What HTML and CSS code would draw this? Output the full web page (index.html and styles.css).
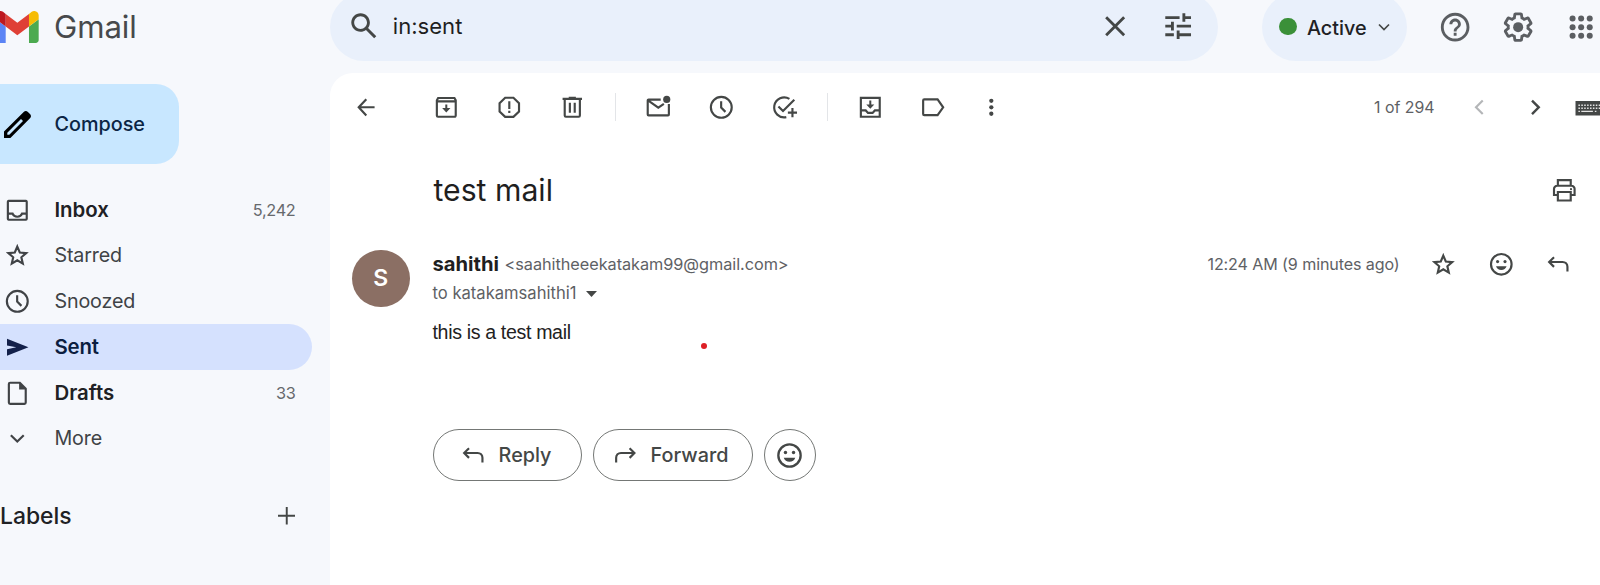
FILE: index.html
```
<!DOCTYPE html>
<html lang="en">
<head>
<meta charset="utf-8">
<title>test mail - Gmail</title>
<link rel="stylesheet" href="styles.css">
</head>
<body>
<svg class="defs" aria-hidden="true">
  <symbol id="star" viewBox="0 0 20 20"><path d="M10 3.900l1.750 4.150 4.500.4-3.400 2.950 1 4.400-3.850-2.350-3.850 2.350 1-4.400-3.400-2.950 4.500-.4z" fill="none" stroke="currentColor" stroke-width="1.500"/></symbol>
  <symbol id="clock" viewBox="0 0 20 20"><circle cx="10" cy="10" r="7.300" fill="none" stroke="currentColor" stroke-width="1.500"/><path d="M9.900 5.700v4.500l3 3" fill="none" stroke="currentColor" stroke-width="1.500"/></symbol>
  <symbol id="smile" viewBox="0 0 20 20"><circle cx="10" cy="10" r="7.200" fill="none" stroke="currentColor" stroke-width="1.500"/><circle cx="7.400" cy="8.100" r="1.100"/><circle cx="12.600" cy="8.100" r="1.100"/><path d="M6.300 11.400h7.400c-.5 1.700-1.900 2.600-3.700 2.600s-3.200-.9-3.700-2.600z"/></symbol>
  <symbol id="reply" viewBox="0 0 20 20"><path d="M7 5L3.600 8.400 7 11.800M3.800 8.400h9.200c2 0 3.400 1.400 3.400 3.400v3.300" fill="none" stroke="currentColor" stroke-width="1.500"/></symbol>
</svg>
<div class="app">
  <header class="topbar">
    <div class="brand">
      <svg class="logo" viewBox="52 42 88 66"><path fill="#5b84f5" d="M58 108h14V74L52 59v43c0 3.320 2.690 6 6 6"/><path fill="#4caa50" d="M120 108h14c3.320 0 6-2.690 6-6V59l-20 15"/><path fill="#f6bc05" d="M120 48v26l20-15v-8c0-7.420-8.470-11.650-14.400-7.200"/><path fill="#df4036" d="M72 74V48l24 18 24-18v26L96 92"/><path fill="#bd1820" d="M52 51v8l20 15V48l-5.600-4.200c-5.940-4.450-14.400-.22-14.400 7.200"/></svg>
      <span class="brand-name">Gmail</span>
    </div>
    <div class="search">
      <svg class="i34" viewBox="0 0 24 24"><path d="M20.490 19l-5.730-5.730C15.530 12.200 16 10.910 16 9.500C16 5.910 13.090 3 9.500 3S3 5.910 3 9.500C3 13.090 5.910 16 9.500 16c1.410 0 2.700-.47 3.770-1.240L19 20.490zM5 9.500C5 7.010 7.010 5 9.500 5S14 7.010 14 9.500S11.990 14 9.500 14S5 11.990 5 9.500z"/></svg>
      <span class="query">in:sent</span>
      <svg class="i34 clear" viewBox="0 0 24 24"><path d="M19 6.410L17.590 5 12 10.590 6.410 5 5 6.410 10.590 12 5 17.590 6.410 19 12 13.410 17.590 19 19 17.590 13.410 12z"/></svg>
      <svg class="i34" viewBox="0 0 24 24"><path d="M3 17v2h6v-2H3zM3 5v2h10V5H3zm10 16v-2h8v-2h-8v-2h-2v6h2zM7 9v2H3v2h4v2h2V9H7zm14 4v-2H11v2h10zm-6-4h2V7h4V5h-4V3h-2v6z"/></svg>
    </div>
    <div class="status">
      <span class="status-dot"></span>
      <span class="status-text">Active</span>
      <svg class="status-caret" viewBox="0 0 12 8"><path d="M1 1.500l5 5 5-5" fill="none" stroke="currentColor" stroke-width="1.700"/></svg>
    </div>
    <div class="tools">
      <svg class="i34" viewBox="0 0 24 24"><path d="M11 18h2v-2h-2v2zm1-16C6.480 2 2 6.480 2 12s4.480 10 10 10 10-4.480 10-10S17.520 2 12 2zm0 18c-4.410 0-8-3.590-8-8s3.590-8 8-8 8 3.590 8 8-3.590 8-8 8zm0-14c-2.210 0-4 1.790-4 4h2c0-1.100.9-2 2-2s2 .9 2 2c0 2-3 1.750-3 5h2c0-2.250 3-2.500 3-5 0-2.210-1.790-4-4-4z"/></svg>
      <svg class="i34" viewBox="0 0 24 24"><path d="M13.850 22.250h-3.700c-.74 0-1.360-.54-1.450-1.270l-.27-1.890c-.27-.14-.53-.29-.79-.46l-1.800.72c-.7.26-1.470-.03-1.810-.65L2.200 15.530c-.35-.66-.2-1.440.36-1.880l1.530-1.190c-.01-.15-.02-.3-.02-.46 0-.15.01-.31.02-.46l-1.520-1.190c-.59-.45-.74-1.260-.37-1.880l1.850-3.190c.34-.62 1.110-.9 1.790-.63l1.810.73c.26-.17.52-.32.78-.46l.27-1.910c.09-.7.71-1.250 1.440-1.250h3.700c.74 0 1.360.54 1.450 1.270l.27 1.890c.27.14.53.29.79.46l1.800-.72c.71-.26 1.480.03 1.820.65l1.840 3.180c.36.66.2 1.440-.36 1.880l-1.520 1.190c.01.15.02.3.02.46s-.01.31-.02.46l1.520 1.190c.56.45.72 1.230.37 1.860l-1.860 3.220c-.34.62-1.110.9-1.800.63l-1.800-.72c-.26.17-.52.32-.78.46l-.27 1.910c-.1.68-.72 1.220-1.460 1.220zm-3.230-2h2.760l.37-2.550.53-.22c.44-.18.88-.44 1.340-.78l.45-.34 2.380.96 1.380-2.400-2.030-1.580.07-.56c.03-.26.06-.51.06-.78s-.03-.53-.06-.78l-.07-.56 2.030-1.580-1.390-2.400-2.390.96-.45-.35c-.42-.32-.87-.58-1.330-.77l-.52-.22-.37-2.550h-2.760l-.37 2.550-.53.21c-.44.19-.88.44-1.340.79l-.45.33-2.380-.95-1.390 2.390 2.030 1.580-.07.56a7 7 0 0 0-.06.79c0 .26.02.53.06.78l.07.56-2.030 1.580 1.380 2.400 2.390-.96.45.35c.43.33.86.58 1.330.77l.53.22.38 2.550z"/><circle cx="12" cy="12" r="3.500"/></svg>
      <svg class="i34" viewBox="0 0 24 24"><circle cx="6" cy="6" r="2.100"/><circle cx="12" cy="6" r="2.100"/><circle cx="18" cy="6" r="2.100"/><circle cx="6" cy="12" r="2.100"/><circle cx="12" cy="12" r="2.100"/><circle cx="18" cy="12" r="2.100"/><circle cx="6" cy="18" r="2.100"/><circle cx="12" cy="18" r="2.100"/><circle cx="18" cy="18" r="2.100"/></svg>
    </div>
  </header>

  <div class="content">
    <nav class="sidebar">
      <div class="compose">
        <svg class="compose-icon" viewBox="0 0 27 27"><path fill-rule="evenodd" d="M0 27v-6.400L19.700 1c1.300-1.300 2.900-1.300 4.200 0L26 3.100c1.300 1.300 1.300 2.900 0 4.200L6.400 27zM3.300 23.700h2L19 10 17 8 3.300 21.700z"/></svg>
        <span>Compose</span>
      </div>
      <div class="nav-item bold">
        <svg class="i29" viewBox="0 0 20 20"><path d="M4 3.400h12a.7.7 0 0 1 .6.600v12a.7.7 0 0 1-.6.600H4a.7.7 0 0 1-.6-.6V4a.7.7 0 0 1 .6-.6zM3.500 12.300h3.200c.5 1.300 1.800 2.200 3.300 2.200s2.800-.9 3.300-2.200h3.200" fill="none" stroke="currentColor" stroke-width="1.500"/></svg>
        <span class="nav-label">Inbox</span><span class="count">5,242</span>
      </div>
      <div class="nav-item"><svg class="i29"><use href="#star"/></svg><span class="nav-label">Starred</span></div>
      <div class="nav-item"><svg class="i29"><use href="#clock"/></svg><span class="nav-label">Snoozed</span></div>
      <div class="nav-item bold active">
        <svg class="i29" viewBox="0 0 20 20"><path d="M2.800 4.100L17.800 10 2.800 15.900v-4.600L9.300 10 2.800 8.700z"/></svg>
        <span class="nav-label">Sent</span>
      </div>
      <div class="nav-item bold">
        <svg class="i29" viewBox="0 0 20 20"><path d="M5 2.600h6.800l4.100 4.100V16.500a.9.9 0 0 1-.9.900H5a.9.9 0 0 1-.9-.9v-13a.9.9 0 0 1 .9-.9z" fill="none" stroke="currentColor" stroke-width="1.500"/><path d="M11.300 2.200v5.200h5z"/></svg>
        <span class="nav-label">Drafts</span><span class="count">33</span>
      </div>
      <div class="nav-item">
        <svg class="i29" viewBox="0 0 20 20"><path d="M5.500 7.800l4.500 4.500 4.500-4.500" fill="none" stroke="currentColor" stroke-width="1.500"/></svg>
        <span class="nav-label">More</span>
      </div>
      <div class="labels">
        <span>Labels</span>
        <svg class="plus" viewBox="0 0 18 18"><path d="M9 0v18M0 9h18" fill="none" stroke="currentColor" stroke-width="2"/></svg>
      </div>
    </nav>

    <main class="mail">
      <div class="toolbar">
        <span class="cell back"><svg class="i29" viewBox="0 0 20 20"><path d="M10 4.300L4.700 10l5.300 5.700M4.600 10h11.200" fill="none" stroke="currentColor" stroke-width="1.500"/></svg></span>
        <span class="cell"><svg class="i29" viewBox="0 0 20 20"><path d="M4.300 3.500h11.400l.9 1.600v10.700a.8.8 0 0 1-.8.800H4.200a.8.8 0 0 1-.8-.8V5.100zM3.400 5.900h13.200" fill="none" stroke="currentColor" stroke-width="1.500"/><path d="M9.300 8h1.400v2.500h2.200L10 13.600 7.100 10.500h2.200z"/></svg></span>
        <span class="cell"><svg class="i29" viewBox="0 0 20 20"><path d="M7.100 3.300h5.800l3.900 3.800v5.800l-3.900 3.800H7.100l-3.900-3.800V7.100z" fill="none" stroke="currentColor" stroke-width="1.500"/><path d="M9.250 5.800h1.500v5.400h-1.500zM9.250 12.500h1.500v1.500h-1.500z"/></svg></span>
        <span class="cell"><svg class="i29" viewBox="0 0 20 20"><path d="M4.700 4.200v11.600a.8.8 0 0 0 .8.800h9a.8.8 0 0 0 .8-.8V4.200M3.200 4.100h13.600M7.500 3.300h5M8.300 6.800v7M11.700 6.800v7" fill="none" stroke="currentColor" stroke-width="1.500"/></svg></span>
        <span class="rule"></span>
        <span class="cell"><svg class="i29" viewBox="0 0 20 20"><path d="M11.700 4.600H3.200a.6.600 0 0 0-.6.600v9.800a.6.600 0 0 0 .6.600h13.600a.6.600 0 0 0 .6-.6V7.700M2.800 5.200l7.200 5 3.900-2.600" fill="none" stroke="currentColor" stroke-width="1.500"/><circle cx="15.900" cy="4.500" r="2.500"/></svg></span>
        <span class="cell"><svg class="i29"><use href="#clock"/></svg></span>
        <span class="cell"><svg class="i29" viewBox="0 0 20 20"><path d="M13.600 4.100A7 7 0 1 0 11.400 16.900M5.900 9.400l3.200 3.200 7.900-7.900" fill="none" stroke="currentColor" stroke-width="1.500"/><path d="M15.700 10.500v6.400M12.500 13.700h6.400" fill="none" stroke="currentColor" stroke-width="1.500"/></svg></span>
        <span class="rule"></span>
        <span class="cell"><svg class="i29" viewBox="0 0 20 20"><path d="M3.400 3.400h13.200v13.200H3.400zM3.400 12.200h3.400l1.600 1.700h3.200l1.600-1.700h3.400" fill="none" stroke="currentColor" stroke-width="1.500"/><path d="M9.300 5.300h1.400V8h2.100L10 11 7.200 8h2.100z"/></svg></span>
        <span class="cell"><svg class="i29" viewBox="0 0 20 20"><path d="M3.700 4.500h9.300l3.900 5.500-3.900 5.500H3.700a.8.8 0 0 1-.8-.8V5.300a.8.8 0 0 1 .8-.8z" fill="none" stroke="currentColor" stroke-width="1.500"/></svg></span>
        <span class="cell narrow"><svg class="i29" viewBox="0 0 20 20"><circle cx="10" cy="5.500" r="1.500"/><circle cx="10" cy="10" r="1.500"/><circle cx="10" cy="14.500" r="1.500"/></svg></span>
        <span class="pager">1 of 294</span>
        <svg class="i29 prev" viewBox="0 0 20 20"><path d="M12.400 5.300L7.700 10l4.700 4.700" fill="none" stroke="currentColor" stroke-width="1.500"/></svg>
        <svg class="i29 next" viewBox="0 0 20 20"><path d="M7.700 5.300l4.700 4.700-4.700 4.700" fill="none" stroke="currentColor" stroke-width="1.700"/></svg>
        <svg class="keyboard" viewBox="0 0 30 15"><path d="M0 0h30v15H0z"/><g fill="none" stroke="#e4e4e4"><path d="M3 4.500h24M3 7.500h24" stroke-width="1.600" stroke-dasharray="1.600 1.400"/><path d="M3 10.800h1.600M6 10.800h12M20 10.800h1.600" stroke-width="1.400"/></g></svg>
      </div>

      <div class="subject-row">
        <h1 class="subject">test mail</h1>
        <svg class="i29" viewBox="0 0 20 20"><path d="M5.500 6.800V2.900h9v3.900M5.500 13.300H2.800V9a2.200 2.200 0 0 1 2.200-2.200h10A2.200 2.200 0 0 1 17.200 9v4.300h-2.700M5.500 11.200h9v5.900h-9z" fill="none" stroke="currentColor" stroke-width="1.500"/><circle cx="14.700" cy="9.200" r=".75"/></svg>
      </div>

      <article class="message">
        <div class="avatar">S</div>
        <div class="message-body">
          <div class="sender-row">
            <span class="sender">sahithi</span>
            <span class="email">&lt;saahitheeekatakam99@gmail.com&gt;</span>
            <span class="time">12:24 AM (9 minutes ago)</span>
            <svg class="i29"><use href="#star"/></svg>
            <svg class="i29"><use href="#smile"/></svg>
            <svg class="i29"><use href="#reply"/></svg>
          </div>
          <div class="recipient">to katakamsahithi1<svg class="triangle" viewBox="0 0 11 6"><path d="M0 0h11L5.500 6z"/></svg></div>
          <p class="text">this is a test mail</p>
          <span class="pointer"></span>
          <div class="actions">
            <span class="btn reply"><svg class="i29"><use href="#reply"/></svg><span>Reply</span></span>
            <span class="btn forward"><svg class="i29 flip"><use href="#reply"/></svg><span>Forward</span></span>
            <span class="btn round"><svg class="i31"><use href="#smile"/></svg></span>
          </div>
        </div>
      </article>
    </main>
  </div>
</div>
</body>
</html>
```
FILE: styles.css
```
* { box-sizing: border-box; }
body {
  margin: 0;
  background: #f6f8fc;
  color: #202124;
  font: 400 19.8px/1 Inter, "Liberation Sans", sans-serif;
}
svg { display: block; flex: none; fill: currentColor; }
.defs { position: absolute; width: 0; height: 0; }
.i34 { width: 34.3px; height: 34.3px; }
.i31 { width: 31px; height: 31px; }
.i29 { width: 28.6px; height: 28.6px; }
.app { width: 1600px; height: 585px; overflow: hidden; white-space: nowrap; }

/* Top bar */
.topbar { display: flex; height: 73px; }
.brand { flex: none; display: flex; width: 330px; height: 54px; align-items: center; }
.logo { width: 42.7px; height: 32px; margin-left: -3.7px; }
.brand-name { margin: 2px 0 0 15px; color: #47494b; font-size: 31.2px; letter-spacing: -0.1px; }
.search {
  flex: none; display: flex; align-items: center;
  width: 888px; height: 68px; margin-top: -7.5px; padding: 0 22.5px 0 16.5px;
  border-radius: 34px; background: #e9f0fb; color: #444746;
}
.query { margin-left: 12px; color: #1f1f1f; font-size: 22.1px; }
.clear { margin: 0 28.7px 0 auto; }
.status {
  flex: none; display: flex; align-items: center;
  width: 145px; height: 68px; margin: -7.5px 0 0 44px; padding-left: 17px;
  border-radius: 34px; background: #e9f0fb;
}
.status-dot { width: 17.5px; height: 17.5px; border-radius: 50%; background: #3b9039; }
.status-text { margin: 4px 0 0 10.5px; font-weight: 450; }
.status-caret { width: 12px; height: 8px; margin-left: 11.5px; color: #444746; }
.tools { display: flex; gap: 28.7px; margin: 9.5px 0 0 31px; color: #5b5e62; }

/* Sidebar */
.content { display: flex; height: 512px; }
.sidebar { flex: none; width: 329.5px; padding-top: 11px; }
.compose {
  display: flex; align-items: center;
  width: 179px; height: 80px; margin-bottom: 23px; padding-left: 4px;
  border-radius: 0 23px 23px 0; background: #c8e7ff; color: #0b2545; font-weight: 450;
}
.compose span { margin-top: 1px; }
.compose-icon { width: 27px; height: 27px; margin-right: 23.5px; color: #000; }
.nav-item {
  display: flex; align-items: center;
  width: 312px; height: 45.75px; padding: 0 16.5px 0 2.7px;
  color: #404346; font-size: 19.7px; letter-spacing: -0.15px;
}
.nav-item.bold .nav-label { color: #202124; font-weight: 600; font-size: 20.4px; letter-spacing: 0; }
.nav-item.active { border-radius: 0 23px 23px 0; background: #d5e1fe; color: #13204a; }
.nav-item.active .nav-label { color: #0b1d40; letter-spacing: -0.15px; }
.nav-label { margin: 0.5px 0 0 23.2px; }
.count { margin: 0.5px 0 0 auto; color: #66696d; font-size: 16.3px; letter-spacing: -0.3px; }
.labels {
  display: flex; align-items: center; justify-content: space-between;
  height: 46px; margin-top: 31.5px; padding: 0 34.5px 0 0; font-size: 22.9px; font-weight: 450;
}
.labels span { margin-top: 1px; }
.plus { width: 17.5px; height: 17.5px; color: #444746; }

/* Message panel */
.mail { flex: none; width: 1270.5px; border-radius: 23px 0 0 0; background: #fff; color: #444746; }
.toolbar { display: flex; align-items: center; height: 68px; padding-left: 5.5px; }
.cell { flex: none; display: flex; justify-content: center; width: 63px; }
.cell.back { margin-right: 17px; }
.cell.narrow { width: 52px; }
.rule { flex: none; width: 1px; height: 28px; margin: 0 11px; background: #e3e5e8; }
.pager { margin: 1px 0 0 357px; color: #5e6165; font-size: 15.9px; }
.prev { margin-left: 30px; color: #b4b6b8; }
.next { margin-left: 27.5px; }
.keyboard { width: 30px; height: 14.5px; margin: 3px 0 0 26px; }
.subject-row {
  display: flex; align-items: center; justify-content: space-between;
  height: 98px; padding: 0 21px 0 104px;
}
.subject { margin: 0; color: #1f1f1f; font-size: 30.2px; font-weight: 380; }
.message { display: flex; padding-left: 22.5px; }
.avatar {
  flex: none; display: flex; align-items: center; justify-content: center;
  width: 57.5px; height: 57.5px; margin: 10.5px 23px 0 0; padding-top: 1px;
  border-radius: 50%; background: #8b6f64; color: #fff; font-size: 23px; font-weight: 600;
}
.message-body { position: relative; flex: 1; }
.sender-row { display: flex; align-items: center; height: 50px; padding-right: 27px; }
.sender { color: #1f1f1f; font-size: 20.2px; font-weight: 680; }
.email { margin: 1px 0 0 5.5px; color: #5e6165; font-size: 16.3px; letter-spacing: -0.05px; }
.time { margin-left: auto; color: #5e6165; font-size: 16.1px; letter-spacing: -0.11px; }
.sender-row svg { margin-left: 29.3px; }
.sender-row .time + svg { margin: 1px 0 0 29px; }
.recipient { display: flex; align-items: center; height: 8px; color: #5e6165; font-size: 16.6px; }
.triangle { width: 11px; height: 6px; margin: 1px 0 0 9px; color: #444746; }
.text { margin: 25px 0 0; color: #222; font: 19.6px/20px "Liberation Sans", sans-serif; letter-spacing: -0.35px; }
.pointer {
  position: absolute; left: 268px; top: 104px;
  width: 6px; height: 6px; border-radius: 50%; background: #dd1f26;
}
.actions { display: flex; gap: 11px; margin-top: 87px; }
.btn {
  display: flex; align-items: center; height: 52px;
  border: 1px solid #747775; border-radius: 26px; font-size: 19.8px; font-weight: 450;
}
.btn span { margin-top: 1px; }
.btn.reply { width: 149px; padding-left: 25px; gap: 11.5px; }
.btn.forward { width: 160px; padding-left: 17px; gap: 11.5px; }
.btn.round { width: 52px; justify-content: center; }
.flip { transform: scaleX(-1); }
```
